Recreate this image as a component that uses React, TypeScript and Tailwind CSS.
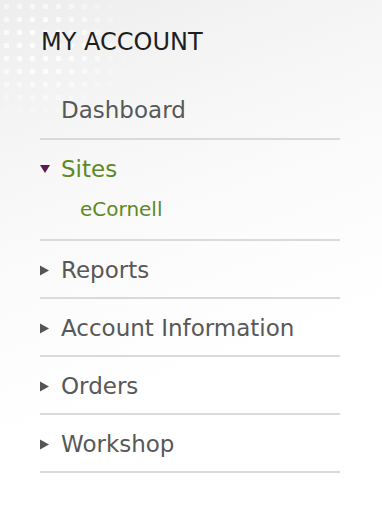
import React from "react";

const font = { fontFamily: '"DejaVu Sans", "Lucida Grande", sans-serif' };

function Right() {
  return (
    <svg width="9" height="11" viewBox="0 0 9 11" className="shrink-0">
      <polygon points="0,0.5 9,5.5 0,10.5" fill="#555555" />
    </svg>
  );
}

function Down() {
  return (
    <svg width="10" height="8" viewBox="0 0 10 8" className="shrink-0">
      <polygon points="0,0 10,0 5,8" fill="#5c1a50" />
    </svg>
  );
}

function Item({ label }: { label: string }) {
  return (
    <div className="border-b-2 border-[#dadada]">
      <div className="h-[56px] flex items-center pt-[2px]">
        <div className="w-[21px] flex items-center">
          <Right />
        </div>
        <span className="text-[23px] leading-none text-[#585858]">{label}</span>
      </div>
    </div>
  );
}

export default function App() {
  return (
    <div
      className="relative w-[382px] h-[508px] overflow-hidden bg-[linear-gradient(160deg,#ededed_0%,#f6f6f6_25%,#fcfcfc_50%,#ffffff_70%)]"
      style={font}
    >
      <div className="absolute left-0 top-0 w-[140px] h-[130px] bg-[radial-gradient(circle,rgba(255,255,255,0.8)_2.6px,transparent_3.2px)] bg-[length:13px_13px] [mask-image:radial-gradient(ellipse_at_30%_35%,black_20%,transparent_70%)]" />
      <div className="relative pl-[40px] w-[340px]">
        <div className="h-[82px] flex items-center pt-[2px]">
          <span className="pl-[1px] text-[24px] leading-none text-[#1e1e1e]">MY ACCOUNT</span>
        </div>
        <div className="border-b-2 border-[#dadada]">
          <div className="h-[56px] flex items-center">
            <span className="pl-[21px] text-[23px] leading-none text-[#585858]">Dashboard</span>
          </div>
        </div>
        <div className="border-b-2 border-[#dadada] h-[101px]">
          <div className="h-[56px] flex items-center pt-[2px]">
            <div className="w-[21px] flex items-center">
              <Down />
            </div>
            <span className="text-[23px] leading-none text-[#5c8a1f]">Sites</span>
          </div>
          <div className="mt-[3px] pl-[40px] text-[20px] leading-none text-[#5c8a1f]">eCornell</div>
        </div>
        <Item label="Reports" />
        <Item label="Account Information" />
        <Item label="Orders" />
        <Item label="Workshop" />
      </div>
    </div>
  );
}
